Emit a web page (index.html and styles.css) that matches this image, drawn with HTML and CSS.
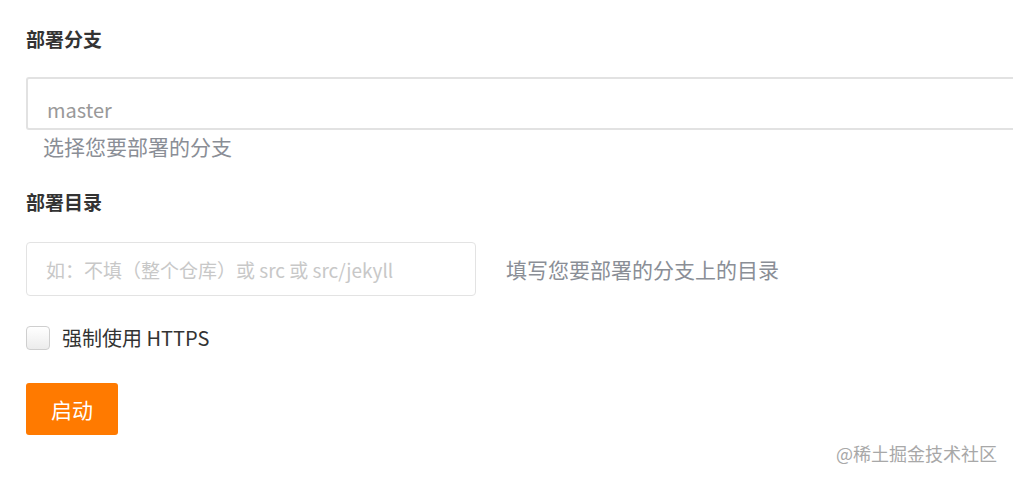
FILE: index.html
```html
<!DOCTYPE html>
<html lang="zh-CN">
<head>
  <meta charset="UTF-8" />
  <meta name="viewport" content="width=device-width, initial-scale=1.0" />
  <title>Pages 部署</title>
  <link rel="stylesheet" href="styles.css">
</head>
<body>
  <div class="deploy-form">
    <!-- Branch -->
    <h3 class="field-title">部署分支</h3>
    <div class="branch-select">master</div>
    <div class="field-help">选择您要部署的分支</div>

    <!-- Directory -->
    <h3 class="field-title spaced">部署目录</h3>
    <div class="dir-row">
      <input class="dir-input" type="text" placeholder="如：不填（整个仓库）或 src 或 src/jekyll" />
      <span class="dir-help">填写您要部署的分支上的目录</span>
    </div>

    <!-- HTTPS -->
    <label class="check-row">
      <input type="checkbox" class="check-box" />
      <span>强制使用 HTTPS</span>
    </label>

    <button class="start-btn" type="button">启动</button>
  </div>

  <div class="watermark">@稀土掘金技术社区</div>
</body>
</html>
```

FILE: styles.css
```css
html, body {
  margin: 0;
  padding: 0;
  background: #fff;
  overflow: hidden;
  height: 480px;
}

body {
  font-family: "Noto Sans CJK SC", "Noto Sans", sans-serif;
  color: #333;
  position: relative;
}

.deploy-form {
  padding: 25px 0 0 26px;
}

.field-title {
  margin: 0;
  font-size: 19px;
  line-height: 28px;
  font-weight: bold;
  color: #333;
}

.field-title.spaced {
  margin-top: 30px;
}

/* runs off the right edge in the screenshot, so no right border */
.branch-select {
  margin-top: 24px;
  width: 100%;
  height: 53px;
  box-sizing: border-box;
  border: 2px solid #e2e2e2;
  border-right: none;
  border-radius: 3px 0 0 3px;
  padding: 12px 0 0 19px;
  font-size: 20px;
  line-height: 26px;
  color: #999;
  display: flex;
  align-items: center;
}

.field-help {
  margin-top: 4px;
  padding-left: 17px;
  font-size: 21px;
  line-height: 24px;
  color: #8a8e96;
}

.dir-row {
  margin-top: 26px;
  display: flex;
  align-items: center;
  gap: 30px;
}

.dir-input {
  width: 450px;
  height: 54px;
  box-sizing: border-box;
  border: 1px solid #e3e3e3;
  border-radius: 4px;
  padding: 0 19px;
  font-family: inherit;
  font-size: 19px;
  outline: none;
}

.dir-input::placeholder {
  color: #c8c8c8;
}

.dir-help {
  font-size: 21px;
  color: #8a8e96;
}

.check-row {
  margin-top: 30px;
  display: flex;
  align-items: center;
  gap: 12px;
  font-size: 20px;
  line-height: 24px;
  color: #333;
}

.check-box {
  appearance: none;
  -webkit-appearance: none;
  margin: 0;
  width: 24px;
  height: 24px;
  border: 1px solid #cfcfcf;
  border-radius: 4px;
  background: linear-gradient(#fff, #ececec);
}

.start-btn {
  margin-top: 33px;
  width: 92px;
  height: 52px;
  border: none;
  border-radius: 3px;
  background: #ff7a00;
  color: #fff;
  font-family: inherit;
  font-size: 21px;
  cursor: pointer;
}

.watermark {
  position: absolute;
  right: 16px;
  top: 442px;
  font-size: 18px;
  line-height: 22px;
  color: #a8a8a8;
}
```
